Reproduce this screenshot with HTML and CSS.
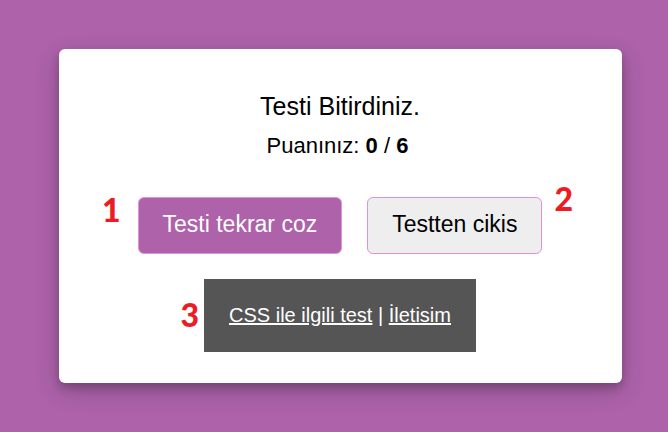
FILE: index.html
```html
<!DOCTYPE html>
<html lang="tr">
<head>
<meta charset="utf-8">
<meta name="viewport" content="width=device-width, initial-scale=1">
<title>Test</title>
<link rel="stylesheet" href="styles.css">
</head>
<body>
<main class="card">
  <h1 class="title">Testi Bitirdiniz.</h1>
  <p class="score">Puanınız: <strong>0</strong> / <strong>6</strong></p>
  <div class="actions">
    <div class="marked">
      <button type="button" class="button button-primary">Testi tekrar coz</button>
      <span class="marker marker-left">1</span>
    </div>
    <div class="marked">
      <button type="button" class="button">Testten cikis</button>
      <span class="marker marker-right">2</span>
    </div>
  </div>
  <footer class="marked footer">
    <a href="#css">CSS ile ilgili test</a> | <a href="#iletisim">İletisim</a>
    <span class="marker marker-footer">3</span>
  </footer>
</main>
</body>
</html>
```

FILE: styles.css
```css
* {
  box-sizing: border-box;
}

body {
  margin: 0;
  padding: 49px 46px 49px 59px;
  background: #ad62aa;
  color: #000;
  font-family: "Liberation Sans", Arial, sans-serif;
}

.card {
  display: flex;
  flex-direction: column;
  align-items: center;
  padding: 41px 25px 31px 24px;
  border-radius: 6px;
  background: #fff;
  box-shadow: 0 5px 10px rgba(0, 0, 0, 0.2), 0 8px 25px rgba(0, 0, 0, 0.19);
}

.title {
  margin: 0;
  font-size: 25px;
  font-weight: 400;
  line-height: 32px;
}

.score {
  margin: 8px 0 0;
  padding-right: 5px;
  font-size: 22px;
  line-height: 32px;
}

.actions {
  display: flex;
  gap: 25px;
  margin-top: 35px;
}

.marked {
  position: relative;
}

.button {
  display: block;
  padding: 11px 24px 13px;
  border: 1px solid #e18fe0;
  border-radius: 6px;
  background: #eee;
  color: #000;
  font-family: inherit;
  font-size: 23px;
  line-height: 31px;
}

.button-primary {
  background: #ad62aa;
  color: #fff;
}

.footer {
  margin-top: 25px;
  padding: 25px;
  background: #555;
  color: #fff;
  font-size: 20px;
  line-height: 23px;
}

.footer a {
  color: inherit;
}

/* Numbered callouts beside the controls */
.marker {
  position: absolute;
  color: #ed1c24;
  font-family: Lato, "Open Sans", sans-serif;
  font-size: 32px;
  font-weight: 900;
  line-height: 32px;
}

.marker-left {
  top: -3px;
  right: 100%;
  margin-right: 17px;
}

.marker-right {
  top: -14px;
  left: 100%;
  margin-left: 12px;
}

.marker-footer {
  top: 20px;
  right: 100%;
  margin-right: 5px;
}
```
